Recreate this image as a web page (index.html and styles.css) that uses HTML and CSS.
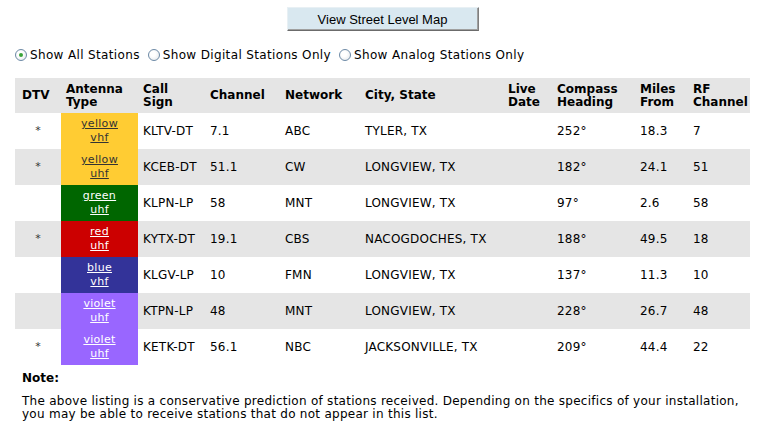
FILE: index.html
```html
<!DOCTYPE html>
<html>
<head>
<meta charset="utf-8">
<link rel="stylesheet" href="styles.css">
</head>
<body>
<div class="page">
  <div class="btn-row"><button class="map-btn" type="button">View Street Level Map</button></div>
  <div class="filters">
    <label class="opt"><input type="radio" name="f" checked> Show All Stations</label>
    <label class="opt"><input type="radio" name="f"> Show Digital Stations Only</label>
    <label class="opt"><input type="radio" name="f"> Show Analog Stations Only</label>
  </div>
  <table class="stations">
    <colgroup>
      <col class="c-dtv"><col class="c-ant"><col class="c-call"><col class="c-ch"><col class="c-net"><col class="c-city"><col class="c-live"><col class="c-comp"><col class="c-miles"><col class="c-rf">
    </colgroup>
    <thead>
      <tr><th>DTV</th><th>Antenna<br>Type</th><th>Call<br>Sign</th><th>Channel</th><th>Network</th><th>City, State</th><th>Live<br>Date</th><th>Compass<br>Heading</th><th>Miles<br>From</th><th>RF<br>Channel</th></tr>
    </thead>
    <tbody>
      <tr><td class="dtv">*</td><td class="ant yellow"><a href="#">yellow<br>vhf</a></td><td>KLTV-DT</td><td>7.1</td><td>ABC</td><td>TYLER, TX</td><td></td><td>252°</td><td>18.3</td><td>7</td></tr>
      <tr class="alt"><td class="dtv">*</td><td class="ant yellow"><a href="#">yellow<br>uhf</a></td><td>KCEB-DT</td><td>51.1</td><td>CW</td><td>LONGVIEW, TX</td><td></td><td>182°</td><td>24.1</td><td>51</td></tr>
      <tr><td class="dtv"></td><td class="ant green"><a href="#">green<br>uhf</a></td><td>KLPN-LP</td><td>58</td><td>MNT</td><td>LONGVIEW, TX</td><td></td><td>97°</td><td>2.6</td><td>58</td></tr>
      <tr class="alt"><td class="dtv">*</td><td class="ant red"><a href="#">red<br>uhf</a></td><td>KYTX-DT</td><td>19.1</td><td>CBS</td><td>NACOGDOCHES, TX</td><td></td><td>188°</td><td>49.5</td><td>18</td></tr>
      <tr><td class="dtv"></td><td class="ant blue"><a href="#">blue<br>vhf</a></td><td>KLGV-LP</td><td>10</td><td>FMN</td><td>LONGVIEW, TX</td><td></td><td>137°</td><td>11.3</td><td>10</td></tr>
      <tr class="alt"><td class="dtv"></td><td class="ant violet"><a href="#">violet<br>uhf</a></td><td>KTPN-LP</td><td>48</td><td>MNT</td><td>LONGVIEW, TX</td><td></td><td>228°</td><td>26.7</td><td>48</td></tr>
      <tr><td class="dtv">*</td><td class="ant violet"><a href="#">violet<br>uhf</a></td><td>KETK-DT</td><td>56.1</td><td>NBC</td><td>JACKSONVILLE, TX</td><td></td><td>209°</td><td>44.4</td><td>22</td></tr>
    </tbody>
  </table>
  <div class="note">
    <div class="note-title">Note:</div>
    <p class="note-text">The above listing is a conservative prediction of stations received. Depending on the specifics of your installation, you may be able to receive stations that do not appear in this list.</p>
  </div>
</div>
</body>
</html>
```
FILE: styles.css
```css
html, body {
  margin: 0;
  padding: 0;
  background: #fff;
}
.page {
  font-family: "DejaVu Sans", Verdana, sans-serif;
  font-size: 12px;
  color: #000;
  padding: 7px 15px 0 15px;
  width: 735px;
}
.btn-row {
  display: flex;
  justify-content: center;
}
.map-btn {
  font-family: "Liberation Sans", Arial, sans-serif;
  font-size: 13px;
  width: 192px;
  height: 24px;
  background: #d9e8f0;
  border: 1px solid;
  border-color: #e8f0f4 #7f7f7f #6b6b6b #e8f0f4;
  box-shadow: inset -1px -1px 0 #a0a0a0;
  color: #000;
  padding: 0;
}
.filters {
  display: flex;
  align-items: center;
  gap: 8px;
  margin-top: 17px;
  height: 14px;
  font-size: 12px;
  letter-spacing: 0.35px;
}
.opt {
  display: flex;
  align-items: center;
  gap: 3px;
  white-space: nowrap;
}
.opt input {
  -webkit-appearance: none;
  appearance: none;
  width: 12px;
  height: 12px;
  margin: 0;
  border: 1px solid #6d8aa6;
  border-radius: 50%;
  background: radial-gradient(circle at 40% 40%, #ffffff 30%, #e0e4e8 100%);
  position: relative;
  box-sizing: border-box;
}
.opt input:checked::after {
  content: "";
  position: absolute;
  left: 3px;
  top: 3px;
  width: 4px;
  height: 4px;
  border-radius: 50%;
  background: #3aa33a;
}
.stations {
  margin-top: 16px;
  border-collapse: collapse;
  table-layout: fixed;
  width: 735px;
}
.c-dtv { width: 46px; }
.c-ant { width: 77px; }
.c-call { width: 67px; }
.c-ch { width: 75px; }
.c-net { width: 80px; }
.c-city { width: 143px; }
.c-live { width: 49px; }
.c-comp { width: 83px; }
.c-miles { width: 53px; }
.c-rf { width: 62px; }
.stations th {
  background: #e5e5e5;
  text-align: left;
  font-weight: bold;
  font-size: 12px;
  line-height: 13px;
  padding: 0 5px;
  height: 35px;
  vertical-align: middle;
}
.stations th:first-child { padding-left: 7px; }
.stations td {
  height: 36px;
  padding: 0 5px;
  vertical-align: middle;
  font-size: 12px;
  line-height: 14px;
  white-space: nowrap;
  letter-spacing: 0.2px;
}
.stations tr.alt td { background: #e5e5e5; }
.stations td.dtv {
  text-align: center;
  font-size: 11px;
  color: #333;
}
.stations td.ant {
  text-align: center;
  padding: 0;
  font-size: 11px;
  line-height: 14px;
  letter-spacing: 0.3px;
}
.ant a { color: #fff; text-decoration: underline; }
.stations tr td.yellow { background: #ffcc33; }
.stations tr td.yellow a { color: #333; }
.stations tr td.green { background: #006600; }
.stations tr td.red { background: #cc0000; }
.stations tr td.blue { background: #333399; }
.stations tr td.violet { background: #9966ff; }
.note {
  padding-left: 7px;
  margin-top: 6px;
}
.note-title {
  font-weight: bold;
  line-height: 14px;
}
.note-text {
  margin: 10px 0 0 0;
  line-height: 13px;
  width: 730px;
  letter-spacing: 0.27px;
}
```
